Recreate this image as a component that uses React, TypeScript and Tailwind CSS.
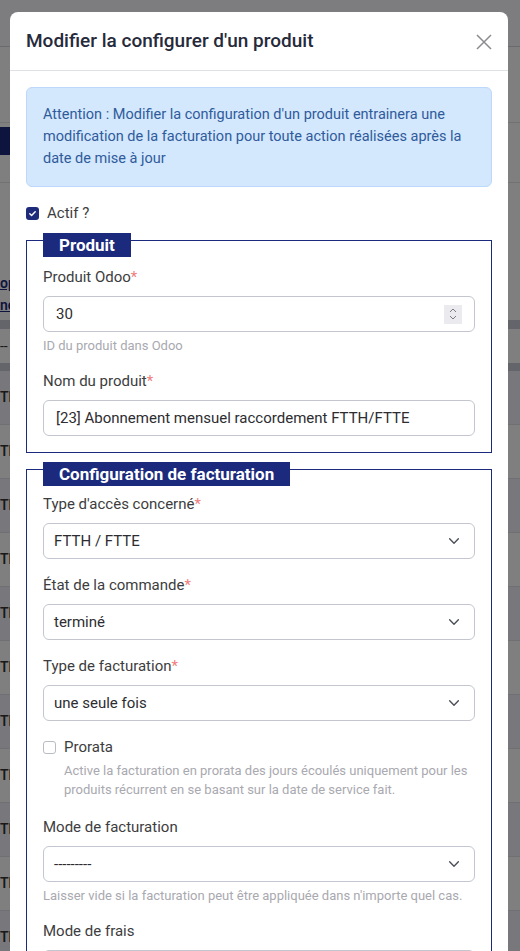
import * as React from 'react';

const rows = Array.from({ length: 11 });

function Chevron() {
  return (
    <svg width="14" height="14" viewBox="0 0 16 16" fill="none" className="shrink-0">
      <path d="M3 5.5l5 5 5-5" stroke="#4b4f58" strokeWidth="1.6" strokeLinecap="round" strokeLinejoin="round" />
    </svg>
  );
}

function Req() {
  return <span className="text-[#f07c7c]">*</span>;
}

function Label({ children, required }: { children: React.ReactNode; required?: boolean }) {
  return (
    <div className="mb-[9px] text-[15px] leading-[20px] text-[#3d3d40]">
      {children}
      {required && <Req />}
    </div>
  );
}

function Help({ children }: { children: React.ReactNode }) {
  return <div className="mt-[4px] text-[13px] leading-[19px] text-[#a9a9b0]">{children}</div>;
}

function Select({ value }: { value: string }) {
  return (
    <div className="flex h-[36px] items-center justify-between rounded-[6px] border border-[#c3c6ce] bg-white pl-[10px] pr-[13px] text-[15px] text-[#2d2d31]">
      <span>{value}</span>
      <Chevron />
    </div>
  );
}

function Legend({ children, tight }: { children: React.ReactNode; tight?: boolean }) {
  return (
    <div className={`-mt-[8px] flex ${tight ? 'mb-[8px]' : 'mb-[10px]'}`}>
      <div className="bg-[#1b2a7c] px-[16px] text-[17px] leading-[24px] font-bold text-white">{children}</div>
    </div>
  );
}

export default function App() {
  return (
    <div className="relative h-[951px] overflow-hidden bg-white font-['Roboto',sans-serif]">
      {/* page underneath */}
      <div className="flex flex-col">
        <div className="h-[47px] border-b border-[#d4d4dc] bg-[#fbfbff]" />
        <div className="h-[76px] border-b border-[#e4e4ea]" />
        <div className="flex h-[60px] items-start border-b border-[#e4e4ea]">
          <div className="mt-[4px] h-[28px] w-[10px] bg-[#1b2a7c]" />
        </div>
        <div className="h-[90px]" />
        <div className="flex flex-col gap-[2px] text-[14px] font-semibold leading-[20px] text-[#1b2a7c] underline">
          <span>ope</span>
          <span>ne</span>
        </div>
        <div className="mt-[5px] h-[9px] bg-[#c9c9d6]" />
        <div className="h-[34px] text-[14px] leading-[34px] text-[#333]">--</div>
        <div className="h-[8px] bg-[#c9c9d6]" />
        {rows.map((_, i) => (
          <div
            key={i}
            className={`flex h-[54px] items-center border-b border-[#e0e0e8] text-[14px] font-semibold text-[#333] ${i % 2 === 0 ? 'bg-[#f0f0f8]' : 'bg-white'}`}
          >
            THD
          </div>
        ))}
      </div>

      {/* backdrop */}
      <div className="absolute inset-0 bg-[#000]/50" />

      {/* modal */}
      <div className="absolute left-[10px] top-[12px] w-[498px] rounded-[8px] bg-white">
        <div className="flex h-[59px] items-center justify-between border-b border-[#dee2e6] px-[16px]">
          <h2 className="text-[19px] font-medium leading-[24px] text-[#262a3a]">Modifier la configurer d'un produit</h2>
          <svg width="16" height="16" viewBox="0 0 16 16" className="mt-[2px]">
            <path d="M1 1l14 14M15 1L1 15" stroke="#8c8c90" strokeWidth="1.5" />
          </svg>
        </div>

        <div className="px-[16px] pt-[16px]">
          <div className="rounded-[6px] border border-[#bcd8fb] bg-[#d3e7fd] p-[16px] text-[14.5px] leading-[22px] text-[#2f5b9b]">
            Attention : Modifier la configuration d'un produit entrainera une modification de la facturation pour toute action réalisées après la date de mise à jour
          </div>

          <label className="mt-[16px] flex items-center gap-[8px] text-[15px] leading-[20px] text-[#3d3d40]">
            <span className="flex h-[13px] w-[13px] items-center justify-center rounded-[3px] bg-[#1e2b7a]">
              <svg width="9" height="9" viewBox="0 0 10 10">
                <path d="M2 5.2l2 2 4-4.2" stroke="white" strokeWidth="1.6" fill="none" strokeLinecap="round" strokeLinejoin="round" />
              </svg>
            </span>
            Actif ?
          </label>

          <div className="mt-[17px] border border-[#1b2a7c] px-[16px] pb-[16px]">
            <Legend>Produit</Legend>
            <Label required>Produit Odoo</Label>
            <div className="flex h-[36px] items-center justify-between rounded-[6px] border border-[#c3c6ce] px-[12px] text-[15px] text-[#2d2d31]">
              <span>30</span>
              <span className="flex h-[19px] w-[18px] items-center justify-center bg-[#ebebef]">
                <svg width="10" height="14" viewBox="0 0 10 14">
                  <path d="M2 5l3-3 3 3M2 9l3 3 3-3" stroke="#7b7b82" strokeWidth="1" fill="none" />
                </svg>
              </span>
            </div>
            <Help>ID du produit dans Odoo</Help>
            <div className="mt-[16px]">
              <Label required>Nom du produit</Label>
              <div className="flex h-[36px] items-center rounded-[6px] border border-[#c3c6ce] pl-[12px] text-[15px] text-[#2d2d31]">
                [23] Abonnement mensuel raccordement FTTH/FTTE
              </div>
            </div>
          </div>

          <div className="mt-[16px] border border-[#1b2a7c] px-[16px] pb-[17px]">
            <Legend tight>Configuration de facturation</Legend>
            <Label required>Type d'accès concerné</Label>
            <Select value="FTTH / FTTE" />
            <div className="mt-[16px]">
              <Label required>État de la commande</Label>
              <Select value="terminé" />
            </div>
            <div className="mt-[16px]">
              <Label required>Type de facturation</Label>
              <Select value="une seule fois" />
            </div>
            <div className="mt-[16px] flex gap-[8px]">
              <span className="mt-[4px] h-[13px] w-[13px] shrink-0 rounded-[3px] border border-[#b9bcc4] bg-white" />
              <div>
                <div className="text-[15px] leading-[20px] text-[#3d3d40]">Prorata</div>
                <Help>
                  Active la facturation en prorata des jours écoulés uniquement pour les produits récurrent en se basant sur la date de service fait.
                </Help>
              </div>
            </div>
            <div className="mt-[18px]">
              <Label>Mode de facturation</Label>
              <Select value="---------" />
              <Help>Laisser vide si la facturation peut être appliquée dans n'importe quel cas.</Help>
            </div>
            <div className="mt-[16px]">
              <Label>Mode de frais</Label>
              <Select value="---------" />
            </div>
          </div>
        </div>
      </div>
    </div>
  );
}
